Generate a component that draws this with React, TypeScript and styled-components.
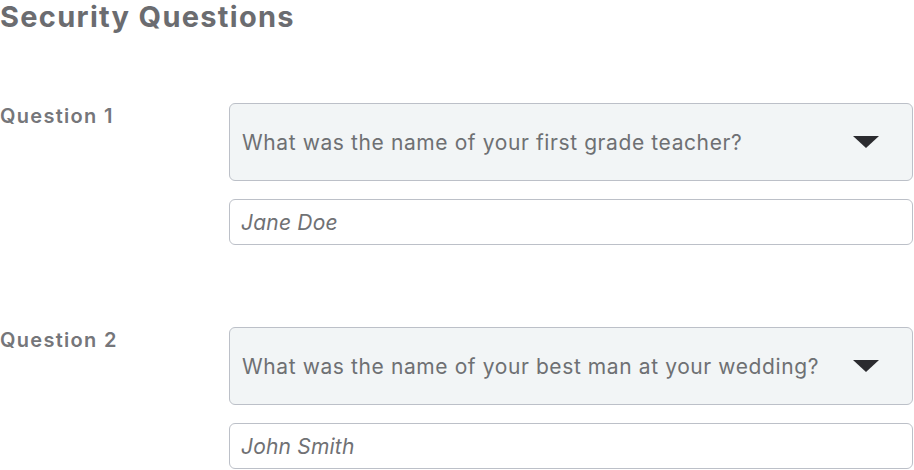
import React from 'react';
import styled, { createGlobalStyle } from 'styled-components';

const GlobalStyle = createGlobalStyle`
  html, body {
    margin: 0;
    padding: 0;
    background: #ffffff;
  }
  body {
    font-family: Inter, "Noto Sans", sans-serif;
    overflow: hidden;
  }
`;

const questions = [
  {
    label: 'Question 1',
    question: 'What was the name of your first grade teacher?',
    answer: 'Jane Doe',
  },
  {
    label: 'Question 2',
    question: 'What was the name of your best man at your wedding?',
    answer: 'John Smith',
  },
];

const ChevronDown = () => (
  <svg width="26" height="12" viewBox="0 0 26 12" aria-hidden="true">
    <path d="M0 0 H26 L13 12 Z" fill="#2b2b2f" />
  </svg>
);

const App = () => {
  return (
    <>
      <GlobalStyle />
      <Page>
        <Heading>Security Questions</Heading>
        <List>
          {questions.map((q) => (
            <Row key={q.label}>
              <Label>{q.label}</Label>
              <Fields>
                <Select>
                  <SelectText>{q.question}</SelectText>
                  <ChevronDown />
                </Select>
                <Answer defaultValue={q.answer} />
              </Fields>
            </Row>
          ))}
        </List>
      </Page>
    </>
  );
};

export default App;

const Page = styled.div`
  width: 914px;
  height: 470px;
  box-sizing: border-box;
`;

const Heading = styled.h1`
  margin: 0;
  padding-top: 1px;
  font-size: 29px;
  line-height: 32px;
  font-weight: 700;
  color: #6b6c70;
  letter-spacing: 1.3px;
`;

const List = styled.div`
  display: flex;
  flex-direction: column;
  gap: 82px;
  margin-top: 70px;
`;

const Row = styled.div`
  display: grid;
  grid-template-columns: 229px 684px;
  align-items: start;
`;

const Label = styled.div`
  font-size: 20px;
  font-weight: 600;
  line-height: 26px;
  color: #75767a;
  letter-spacing: 1.3px;
`;

const Fields = styled.div`
  display: flex;
  flex-direction: column;
  gap: 18px;
`;

const Select = styled.div`
  height: 78px;
  box-sizing: border-box;
  display: flex;
  align-items: center;
  justify-content: space-between;
  padding: 0 33px 0 12px;
  background: #f2f5f6;
  border: 1.5px solid #bcc0c8;
  border-radius: 6px;
`;

const SelectText = styled.span`
  font-size: 21px;
  letter-spacing: 0.6px;
  color: #6e7073;
`;

const Answer = styled.input`
  height: 46px;
  box-sizing: border-box;
  width: 100%;
  padding: 0 11px;
  border: 1.5px solid #bcc0c8;
  border-radius: 6px;
  background: #ffffff;
  font-family: Inter, "Noto Sans", sans-serif;
  font-size: 21px;
  letter-spacing: 0.2px;
  font-style: italic;
  color: #707174;
  outline: none;
`;
